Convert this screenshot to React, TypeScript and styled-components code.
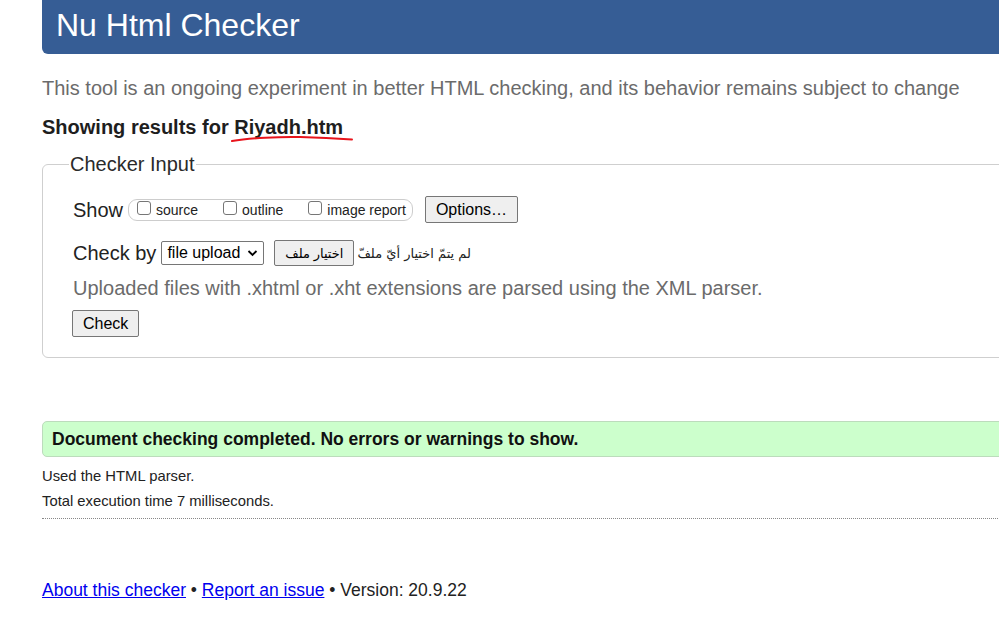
import React from "react";
import styled, { createGlobalStyle } from "styled-components";

const Global = createGlobalStyle`
  html, body { margin: 0; padding: 0; overflow: hidden; background: #fff; }
  body { font-family: "Liberation Sans", Arial, sans-serif; color: #222; }
`;

const Page = styled.div`
  width: 1200px;
  padding-left: 42px;
  box-sizing: border-box;
`;

const Header = styled.h1`
  margin: 0;
  height: 54px;
  box-sizing: border-box;
  padding: 5px 0 0 14px;
  background: #365d95;
  color: #fff;
  font-size: 32px;
  font-weight: normal;
  line-height: 40px;
  border-bottom-left-radius: 6px;
`;

const Intro = styled.p`
  margin: 22px 0 0;
  font-size: 20px;
  line-height: 24px;
  color: #6b6b6b;
`;

const Results = styled.h2`
  margin: 15px 0 0;
  font-size: 20px;
  line-height: 24px;
  font-weight: bold;
  color: #1e1e1e;
`;

const Marked = styled.span`
  position: relative;
`;

const Scribble = styled.svg`
  position: absolute;
  left: -4px;
  top: 19px;
  width: 124px;
  height: 10px;
  overflow: visible;
`;

const Fieldset = styled.fieldset`
  margin: 13px 0 0;
  padding: 10px 30px 20px 30px;
  border: 1px solid #cfcfcf;
  border-radius: 6px;
  min-width: 0;
`;

const Legend = styled.legend`
  padding: 0 1px;
  margin-left: -4px;
  font-size: 20px;
  line-height: 24px;
  color: #2a2a2a;
`;

const Row = styled.div<{ $mt?: number }>`
  display: flex;
  align-items: center;
  margin-top: ${(p) => p.$mt ?? 0}px;
`;

const RowLabel = styled.span`
  font-size: 20px;
  line-height: 24px;
  color: #222;
  margin-right: 5px;
`;

const CheckGroup = styled.div`
  display: flex;
  align-items: center;
  height: 22px;
  box-sizing: border-box;
  border: 1px solid #cdcdcd;
  border-radius: 9px;
  padding: 0 6px 0 8px;
  gap: 25px;
`;

const CheckItem = styled.label`
  display: flex;
  align-items: center;
  font-size: 14px;
  color: #222;
`;

const Box = styled.span`
  width: 14px;
  height: 14px;
  box-sizing: border-box;
  border: 1px solid #767676;
  border-radius: 3px;
  margin: 0 5px 3px 0;
  background: #fff;
`;

const Button = styled.button<{ $h: number; $px: number; $fs: number }>`
  height: ${(p) => p.$h}px;
  padding: 0 ${(p) => p.$px}px;
  font-family: "Liberation Sans", Arial, "DejaVu Sans", sans-serif;
  font-size: ${(p) => p.$fs}px;
  color: #000;
  background: #efefef;
  border: 1px solid #767676;
  border-radius: 2px;
`;

const Select = styled.div`
  display: flex;
  align-items: center;
  height: 24px;
  box-sizing: border-box;
  border: 1px solid #767676;
  border-radius: 2px;
  padding: 0 5px 0 5px;
  font-size: 16px;
  color: #000;
  gap: 7px;
`;

const Arabic = styled.span`
  font-family: "DejaVu Sans", sans-serif;
  font-size: 13px;
  color: #222;
  margin-left: 3px;
`;

const Note = styled.p`
  margin: 10px 0 0;
  font-size: 20px;
  line-height: 24px;
  color: #6b6b6b;
`;

const Success = styled.div`
  margin-top: 63px;
  height: 36px;
  box-sizing: border-box;
  background: #ccffcc;
  border: 1px solid #bcdcbc;
  border-radius: 5px;
  padding: 0 9px;
  display: flex;
  align-items: center;
  font-weight: bold;
  font-size: 17.5px;
  color: #111;
`;

const Small = styled.p<{ $mt: number }>`
  margin: ${(p) => p.$mt}px 0 0;
  font-size: 14.8px;
  line-height: 17px;
  color: #222;
`;

const Dotted = styled.div`
  margin-top: 8px;
  border-bottom: 1px dotted #888;
`;

const Footer = styled.p`
  margin: 61px 0 0;
  font-size: 17.5px;
  line-height: 20px;
  color: #222;
`;

const Link = styled.a`
  color: #0000ee;
  text-decoration: underline;
`;

export default function App() {
  return (
    <>
      <Global />
      <Page>
        <Header>Nu Html Checker</Header>
        <Intro>
          This tool is an ongoing experiment in better HTML checking, and its behavior remains subject to change
        </Intro>
        <Results>
          Showing results for{" "}
          <Marked>
            Riyadh.htm
            <Scribble viewBox="0 0 124 10">
              <path
                d="M2 6 C 20 3, 50 1.5, 70 2 S 108 3.5, 122 4.5"
                fill="none"
                stroke="#e8141c"
                strokeWidth="2"
                strokeLinecap="round"
              />
            </Scribble>
          </Marked>
        </Results>
        <Fieldset>
          <Legend>Checker Input</Legend>
          <Row $mt={10}>
            <RowLabel>Show</RowLabel>
            <CheckGroup>
              <CheckItem><Box />source</CheckItem>
              <CheckItem><Box />outline</CheckItem>
              <CheckItem><Box />image report</CheckItem>
            </CheckGroup>
            <Button $h={27} $px={10} $fs={16} style={{ marginLeft: 12 }}>Options…</Button>
          </Row>
          <Row $mt={17}>
            <RowLabel>Check by</RowLabel>
            <Select>
              file upload
              <svg width="11" height="8" viewBox="0 0 11 8">
                <path d="M1.5 2 L5.5 6 L9.5 2" fill="none" stroke="#000" strokeWidth="1.8" />
              </svg>
            </Select>
            <Button $h={26} $px={10} $fs={13} style={{ marginLeft: 10 }}>اختيار ملف</Button>
            <Arabic>لم يتمّ اختيار أيّ ملفّ</Arabic>
          </Row>
          <Note>Uploaded files with .xhtml or .xht extensions are parsed using the XML parser.</Note>
          <Row $mt={10}>
            <Button $h={27} $px={10} $fs={16} style={{ marginLeft: -1 }}>Check</Button>
          </Row>
        </Fieldset>
        <Success>Document checking completed. No errors or warnings to show.</Success>
        <Small $mt={11}>Used the HTML parser.</Small>
        <Small $mt={8}>Total execution time 7 milliseconds.</Small>
        <Dotted />
        <Footer>
          <Link href="#">About this checker</Link> • <Link href="#">Report an issue</Link> • Version: 20.9.22
        </Footer>
      </Page>
    </>
  );
}
